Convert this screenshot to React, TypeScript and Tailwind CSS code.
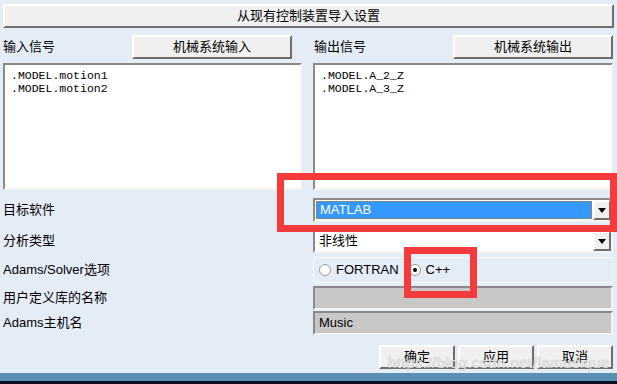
import React from "react";

const raised =
  "border-2 border-t-white border-l-white border-r-[#6e6e6e] border-b-[#6e6e6e] bg-[#f0f0f0]";
const sunken =
  "border-2 border-t-[#8a8a8a] border-l-[#8a8a8a] border-r-[#f4f4f4] border-b-[#f4f4f4]";

const Arrow = () => (
  <div className={`flex h-full w-[18px] shrink-0 items-center justify-center ${raised}`}>
    <svg width="8" height="5" viewBox="0 0 8 5">
      <path d="M0 0h8L4 5z" fill="#000" />
    </svg>
  </div>
);

const Radio = ({ checked }: { checked?: boolean }) => (
  <span className="flex h-[12px] w-[12px] items-center justify-center rounded-full border border-[#9a9a9a] bg-white">
    {checked && <span className="h-[4px] w-[4px] rounded-full bg-black" />}
  </span>
);

const SignalList = ({ items }: { items: string[] }) => (
  <div
    className={`mt-[4px] h-[127px] bg-white px-[6px] pt-[4px] font-['Liberation_Mono',monospace] text-[11.5px] leading-[13px] ${sunken}`}
  >
    {items.map((it) => (
      <div key={it}>{it}</div>
    ))}
  </div>
);

export default function App() {
  return (
    <div className="relative flex h-[384px] w-[617px] flex-col overflow-hidden bg-[#e4ecf6] font-['Liberation_Sans','Noto_Sans_CJK_SC',sans-serif] text-[13px] text-black">
      <div className="px-[3px] pt-[4px]">
        <div className={`flex h-[24px] w-[611px] items-center justify-center ${raised}`}>
          从现有控制装置导入设置
        </div>
      </div>

      <div className="mt-[7px] flex gap-[11px] px-[3px]">
        <div className="w-[299px]">
          <div className="flex h-[24px] items-center justify-between pr-[10px]">
            <span>输入信号</span>
            <div className={`flex h-[24px] w-[160px] items-center justify-center ${raised}`}>
              机械系统输入
            </div>
          </div>
          <SignalList items={[".MODEL.motion1", ".MODEL.motion2"]} />
        </div>
        <div className="w-[300px]">
          <div className="flex h-[24px] items-center justify-between pl-[1px]">
            <span>输出信号</span>
            <div className={`flex h-[24px] w-[160px] items-center justify-center ${raised}`}>
              机械系统输出
            </div>
          </div>
          <SignalList items={[".MODEL.A_2_Z", ".MODEL.A_3_Z"]} />
        </div>
      </div>

      <div className="mt-[8px] flex h-[24px] items-center pl-[3px]">
        <span className="w-[310px]">目标软件</span>
        <div className={`flex h-[24px] w-[300px] items-stretch bg-white ${sunken}`}>
          <div className="m-px flex flex-1 items-center border border-dotted border-[#c77a10] bg-[#3399ff] pl-[3px] text-white">
            MATLAB
          </div>
          <Arrow />
        </div>
      </div>

      <div className="mt-[7px] flex h-[24px] items-center pl-[3px]">
        <span className="w-[310px]">分析类型</span>
        <div className={`flex h-[24px] w-[300px] items-stretch bg-white ${sunken}`}>
          <div className="flex flex-1 items-center pl-[4px]">非线性</div>
          <Arrow />
        </div>
      </div>

      <div className="mt-[4px] flex h-[26px] items-center pl-[3px]">
        <span className="w-[310px]">Adams/Solver选项</span>
        <div className="flex h-[26px] w-[300px] items-center gap-[4px] border border-[#f7fafd] pl-[5px]">
          <Radio />
          <span className="ml-[1px]">FORTRAN</span>
          <span className="ml-[6px]">
            <Radio checked />
          </span>
          <span className="ml-[1px]">C++</span>
        </div>
      </div>

      <div className="mt-[3px] flex h-[24px] items-center pl-[3px]">
        <span className="w-[310px]">用户定义库的名称</span>
        <div className={`h-[24px] w-[300px] bg-[#c8c8c8] ${sunken}`} />
      </div>

      <div className="mt-[1px] flex h-[24px] items-center pl-[3px]">
        <span className="w-[310px]">Adams主机名</span>
        <div className={`flex h-[24px] w-[300px] items-center bg-[#c8c8c8] pl-[4px] ${sunken}`}>
          Music
        </div>
      </div>

      <div className="mt-[10px] flex justify-end gap-[3px] pr-[4px]">
        {["确定", "应用", "取消"].map((b) => (
          <div key={b} className={`flex h-[24px] w-[76px] items-center justify-center ${raised}`}>
            {b}
          </div>
        ))}
      </div>

      <div className="mt-auto h-[8px] bg-[#5b8fb6]" />
      <div className="h-[3px] bg-[#0c0c22]" />

      <div className="pointer-events-none absolute left-[388px] top-[352px] text-[15px] tracking-[0.5px] text-white/70 [text-shadow:0_0_1px_#9a9a9a]">
        https://blog.csdn.net/lamusique
      </div>

      <div className="pointer-events-none absolute left-[277px] top-[173px] h-[59px] w-[340px] border-[7px] border-[#f43a3a]" />
      <div className="pointer-events-none absolute left-[404px] top-[247px] h-[51px] w-[73px] border-[7px] border-[#f43a3a]" />
    </div>
  );
}
